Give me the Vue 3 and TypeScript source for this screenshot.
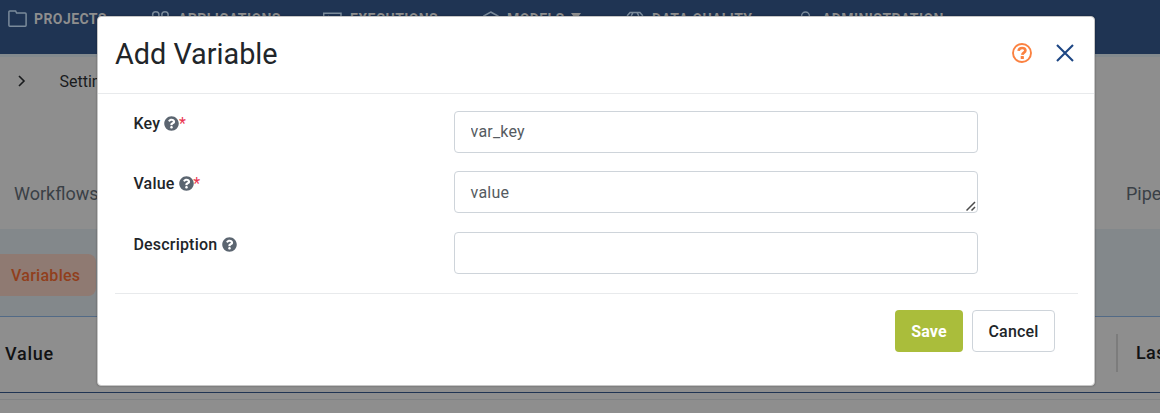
<script setup lang="ts">
import { ref } from 'vue'

interface Field {
  id: string
  label: string
  value: string
  required: boolean
  multiline: boolean
}

const navItems = [
  { label: 'PROJECTS', icon: 'folder' },
  { label: 'APPLICATIONS', icon: 'apps' },
  { label: 'EXECUTIONS', icon: 'terminal' },
  { label: 'MODELS', icon: 'cube', caret: true },
  { label: 'DATA QUALITY', icon: 'globe' },
  { label: 'ADMINISTRATION', icon: 'user' },
]

const fields = ref<Field[]>([
  { id: 'key', label: 'Key', value: 'var_key', required: true, multiline: false },
  { id: 'value', label: 'Value', value: 'value', required: true, multiline: true },
  { id: 'description', label: 'Description', value: '', required: false, multiline: false },
])
</script>

<template>
  <div class="screen">
    <div class="page">
      <nav class="nav">
        <div v-for="item in navItems" :key="item.label" class="nav-item">
          <svg class="nav-icon" :class="item.icon" width="20" height="18" viewBox="0 0 20 18" fill="none" stroke="currentColor" stroke-width="1.5">
            <path v-if="item.icon === 'folder'" d="M.9 1.7V15.3q0 .9.9.9H17.2q.9 0 .9-.9V4q0-.9-.9-.9H8.6L7.6 .9H1.8Q.9.9.9 1.7Z" />
            <g v-else-if="item.icon === 'apps'">
              <circle cx="4.8" cy="5" r="3.2" /><circle cx="14" cy="5" r="3.2" />
              <circle cx="4.8" cy="13.5" r="3.2" /><circle cx="14" cy="13.5" r="3.2" />
            </g>
            <path v-else-if="item.icon === 'terminal'" d="M.7 3.2H18V16H.7ZM5 6l3 3-3 3" />
            <path v-else-if="item.icon === 'cube'" d="M7.700 2 15 6v8l-7.300 3.500L.7 14V6ZM.7 6l7 4 7.300-4" />
            <path v-else-if="item.icon === 'globe'" d="M1 8q0-3 3-5.400h10q3 2.400 3 5.400M7 2.500Q5 5 5 9t2 7M11 2.500Q13 5 13 9t-2 7M1 9h16" />
            <g v-else><circle cx="5.500" cy="6" r="3.900" /><path d="M0 17q0-6 5.500-6t5.500 6" /></g>
          </svg>
          <span class="nav-label">{{ item.label }}</span>
          <svg v-if="item.caret" class="caret" width="10" height="7" viewBox="0 0 10 7"><path d="M0 0h10L5 7Z" fill="currentColor" /></svg>
        </div>
      </nav>
      <div class="crumbs">
        <svg width="8" height="12" viewBox="0 0 8 12" fill="none" stroke="currentColor" stroke-width="1.6"><path d="m1 1 5 5-5 5" /></svg>
        <span>Settings</span>
      </div>
      <div class="tabs"><span>Workflows</span><span>Pipe</span></div>
      <div class="subtabs"><span class="pill">Variables</span></div>
      <div class="table-head"><span>Value</span><span class="last">Last</span></div>
      <div class="table-row"></div>
    </div>

    <section class="dialog" role="dialog">
      <header class="dialog-head">
        <h1>Add Variable</h1>
        <svg class="help" width="20" height="20" viewBox="0 0 20 20" fill="none">
          <circle cx="10" cy="10" r="9" stroke="currentColor" stroke-width="1.900" />
          <path d="M6.600 7.900C6.900 5.700 8.300 5 10.100 5c1.900 0 3.300 1 3.300 2.600 0 2.100-2.900 2.100-3.100 4.300" stroke="currentColor" stroke-width="2.700" />
          <rect x="8.700" y="13" width="3.200" height="3" rx=".6" fill="currentColor" />
        </svg>
        <svg class="close" width="18" height="18" viewBox="0 0 18 18" fill="none" stroke="currentColor" stroke-width="2.100"><path d="m1 1 16 16M17 1 1 17" /></svg>
      </header>
      <form class="form" @submit.prevent>
        <div v-for="field in fields" :key="field.id" class="row" :class="field.id">
          <label :for="field.id">
            {{ field.label }}
            <svg class="hint" width="15" height="15" viewBox="0 0 512 512"><path fill="currentColor" d="M504 256c0 137-111 248-248 248S8 393 8 256C8 119.100 119 8 256 8s248 111.100 248 248zM262.700 90c-54.500 0-89.300 23-116.500 63.800-3.500 5.300-2.400 12.400 2.700 16.300l34.700 26.300c5.200 3.900 12.600 3 16.700-2.100 17.900-22.700 30.100-35.800 57.300-35.800 20.400 0 45.700 13.100 45.700 33 0 15-12.400 22.700-32.500 34C247.100 238.500 216 254.900 216 296v4c0 6.600 5.400 12 12 12h56c6.600 0 12-5.400 12-12v-1.300c0-28.500 83.200-29.600 83.200-106.700 0-58-60.200-102-116.500-102zM256 338c-25.400 0-46 20.600-46 46s20.600 46 46 46 46-20.600 46-46-20.600-46-46-46z" /></svg><span v-if="field.required" class="star">*</span>
          </label>
          <div v-if="field.multiline" class="area">
            <textarea :id="field.id" v-model="field.value" rows="1"></textarea>
            <svg class="grip" width="10" height="10" viewBox="0 0 10 10" stroke="#4c4c4c" stroke-width="1.500"><path d="M.5 9.500 9 1M5.500 9.500 9 6" /></svg>
          </div>
          <input v-else :id="field.id" v-model="field.value" type="text">
        </div>
      </form>
      <footer class="actions">
        <button type="button" class="save">Save</button>
        <button type="button" class="cancel">Cancel</button>
      </footer>
    </section>
  </div>
</template>

<style>
html, body { margin: 0; overflow: hidden; }
</style>

<style scoped>
* { box-sizing: border-box; }
.screen { position: relative; height: 413px; overflow: hidden; font-family: Roboto, "Liberation Sans", sans-serif; font-size: 16px; color: #212529; }
.page { height: 413px; background: #8e8e8e; overflow: hidden; white-space: nowrap; }
.nav { height: 54px; background: #1f3453; color: #8e8e8e; display: grid; grid-template-columns: 143px 172px 160px 143px 174px 200px; padding: 9px 0 0 8px; }
.nav-item { display: flex; height: 20px; align-items: center; font-size: 14px; font-weight: 700; letter-spacing: .42px; }
.nav-icon { flex: none; margin-right: 6px; color: #7b8b9b; }
.nav-icon.apps, .nav-icon.terminal { margin-right: 7px; }
.nav-icon.cube { margin-right: 4px; }
.nav-icon.user { margin-right: 2px; }
.caret { margin: 0 0 6px 6px; }
.crumbs { height: 108px; border-top: 3px solid #838a8e; display: flex; align-items: center; gap: 34px; padding: 0 0 57px 17.500px; color: #191b1d; }
.tabs { height: 67px; display: flex; justify-content: space-between; padding: 22px 0 0 14px; font-size: 18px; line-height: 20px; color: #3a4046; }
.tabs span:last-child { width: 34px; }
.subtabs { height: 87px; background: #83888b; padding-top: 25px; }
.pill { display: block; width: 96px; height: 42px; border-radius: 0 8px 8px 0; background: #8f7a72; color: #913f1c; font-weight: 500; line-height: 43px; padding-left: 11px; letter-spacing: .28px; }
.table-head { height: 77px; border-top: 1px solid #526a86; border-bottom: 1px solid #1f3453; display: flex; justify-content: space-between; align-items: center; padding: 0 0 3px 5px; font-size: 18px; font-weight: 500; letter-spacing: .75px; color: #111213; }
.table-head .last { width: 44px; height: 38px; line-height: 38px; border-left: 2px solid #7c7c7c; padding-left: 18px; letter-spacing: .4px; }
.table-row { margin-top: 6px; border-top: 1px solid #808284; }

.dialog { position: absolute; left: 97px; top: 16px; width: 998px; height: 370px; border: 1px solid #c6c6c6; border-radius: 4px; background: #fff; box-shadow: 0 0 2px rgba(0, 0, 0, .4); }
.dialog-head { height: 77px; border-bottom: 1px solid #e8eaec; display: flex; align-items: center; padding: 0 20px 3px 17px; }
h1 { flex: 1; margin: 0; font-size: 28.800px; font-weight: 400; line-height: 34px; }
.help { color: #fb8140; margin: 0 24px 2px 0; }
.close { color: #1d4684; margin: 0 .5px 2px 0; }
.form { margin: 0 16px 0 17px; padding: 17px 0 19px 18px; border-bottom: 1px solid #e8eaec; display: grid; row-gap: 18px; height: 200px; }
.row { display: grid; grid-template-columns: 321px 524px; height: 42px; align-items: start; }
.row.description { margin-top: 1px; }
label { font-weight: 500; line-height: 26px; height: 26px; padding-left: .4px; white-space: nowrap; letter-spacing: .2px; }
.hint { color: #5b6570; vertical-align: -2px; }
.star { color: #ea3550; font-weight: 400; margin-left: -.5px; }
input, textarea { display: block; width: 524px; height: 42px; margin: 0; border: 1px solid #ced4da; border-radius: 4px; background: #fff; color: #555b61; font: 400 16px/24px Roboto, "Liberation Sans", sans-serif; letter-spacing: .2px; padding: 7px 15.600px 9px; outline: 0; overflow: hidden; }
textarea { resize: none; padding: 9px 15.600px 7px; }
.area { position: relative; }
.grip { position: absolute; right: 2px; bottom: 2px; fill: none; }
.actions { display: flex; justify-content: flex-end; gap: 9px; padding: 16px 39px 0 0; }
button { height: 42px; margin: 0; border-radius: 4px; font: 500 16px/24px Roboto, "Liberation Sans", sans-serif; padding: 2px 0 0; letter-spacing: .2px; }
.save { width: 68px; border: 0; background: #aabd3b; color: #fff; font-weight: 700; }
.cancel { width: 83px; border: 1px solid #ced4da; background: #fff; color: #212529; }
</style>
